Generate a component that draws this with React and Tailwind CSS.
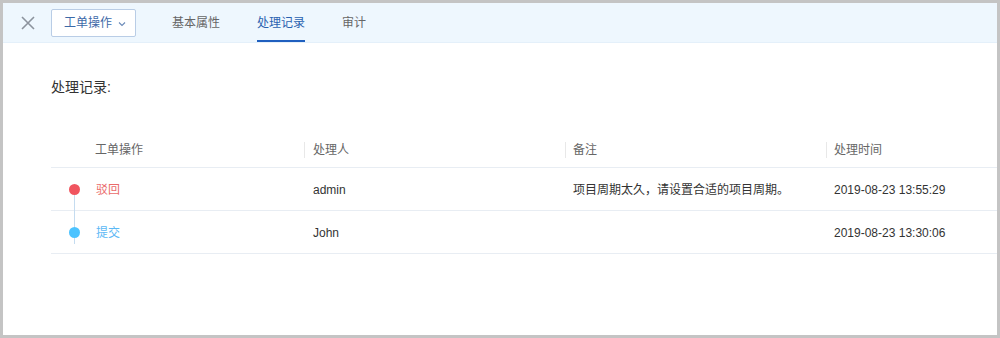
export default function App() {
  const font = { fontFamily: '"Liberation Sans", "Noto Sans CJK SC", sans-serif' };
  return (
    <div className="w-[1000px] h-[338px] border-[3px] border-[#c4c4c4] bg-white box-border overflow-hidden" style={font}>
      <div className="h-[40px] bg-[#eef7fe] border-b border-[#e4f0fa] flex items-center box-border">
        <div className="w-[48px] flex justify-center pl-[2px]">
          <svg width="14" height="14" viewBox="0 0 14 14" className="text-[#8c939d]">
            <path d="M1 1 L13 13 M13 1 L1 13" stroke="currentColor" strokeWidth="1.6" fill="none" />
          </svg>
        </div>
        <div className="h-[28px] w-[85px] border border-[#b9cde6] bg-white rounded-[2px] flex items-center pl-[12px] text-[12px] text-[#3d6aa8] box-border mt-[1px]">
          <span>工单操作</span>
          <svg width="8" height="6" viewBox="0 0 8 6" className="ml-[6px] mt-[1px]">
            <path d="M1 1.5 L4 4.5 L7 1.5" stroke="#6a8ab8" strokeWidth="1.1" fill="none" />
          </svg>
        </div>
        <div className="flex h-full ml-[36px] gap-[37px] text-[12px]">
          <div className="h-full flex items-center text-[#666] pt-[1px]">基本属性</div>
          <div className="h-full flex items-center text-[#2a62b0] relative pt-[1px]">
            处理记录
            <div className="absolute left-0 right-0 bottom-0 h-[2px] bg-[#1f5fbf]"></div>
          </div>
          <div className="h-full flex items-center text-[#666] pt-[1px]">审计</div>
        </div>
      </div>
      <div className="pl-[48px]">
        <div className="mt-[34px] text-[14px] leading-[20px] text-[#333]">处理记录:</div>
        <div className="mt-[33px]">
          <div className="h-[37px] pt-[3px] box-border flex items-center text-[12px] text-[#666] border-b border-[#e8edf3]" style={{ boxSizing: 'content-box', height: '34px' }}>
            <div className="w-[253px] pl-[44px]">工单操作</div>
            <div className="w-[261px] flex items-center">
              <div className="w-px h-[16px] bg-[#e8e8e8] mr-[8px]"></div>处理人
            </div>
            <div className="w-[261px] flex items-center">
              <div className="w-px h-[16px] bg-[#e8e8e8] mr-[7px]"></div>备注
            </div>
            <div className="flex-1 flex items-center">
              <div className="w-px h-[16px] bg-[#e8e8e8] mr-[7px]"></div>处理时间
            </div>
          </div>
          <div className="h-[42px] pt-[1px] flex items-center text-[12px] text-[#333] border-b border-[#e8edf3] box-border" style={{ height: '43px' }}>
            <div className="w-[253px] h-full flex items-center relative">
              <div className="absolute left-[22.5px] top-1/2 h-[43px] w-px bg-[#c5dcf0]"></div>
              <div className="ml-[18px] w-[11px] h-[11px] rounded-full bg-[#f0555f] relative"></div>
              <span className="ml-[16px] text-[#ea6b6b]">驳回</span>
            </div>
            <div className="w-[261px] pl-[9px]">admin</div>
            <div className="w-[261px] pl-[8px]">项目周期太久，请设置合适的项目周期。</div>
            <div className="flex-1 pl-[8px]">2019-08-23 13:55:29</div>
          </div>
          <div className="pt-[1px] flex items-center text-[12px] text-[#333] border-b border-[#e8edf3] box-border" style={{ height: '43px' }}>
            <div className="w-[253px] h-full flex items-center relative">
              <div className="absolute left-[22.5px] top-0 h-[32px] w-px bg-[#c5dcf0]"></div>
              <div className="ml-[18px] w-[11px] h-[11px] rounded-full bg-[#4cc3ff] relative"></div>
              <span className="ml-[16px] text-[#5bb8f5]">提交</span>
            </div>
            <div className="w-[261px] pl-[9px]">John</div>
            <div className="w-[261px] pl-[8px]"></div>
            <div className="flex-1 pl-[8px]">2019-08-23 13:30:06</div>
          </div>
        </div>
      </div>
    </div>
  );
}
